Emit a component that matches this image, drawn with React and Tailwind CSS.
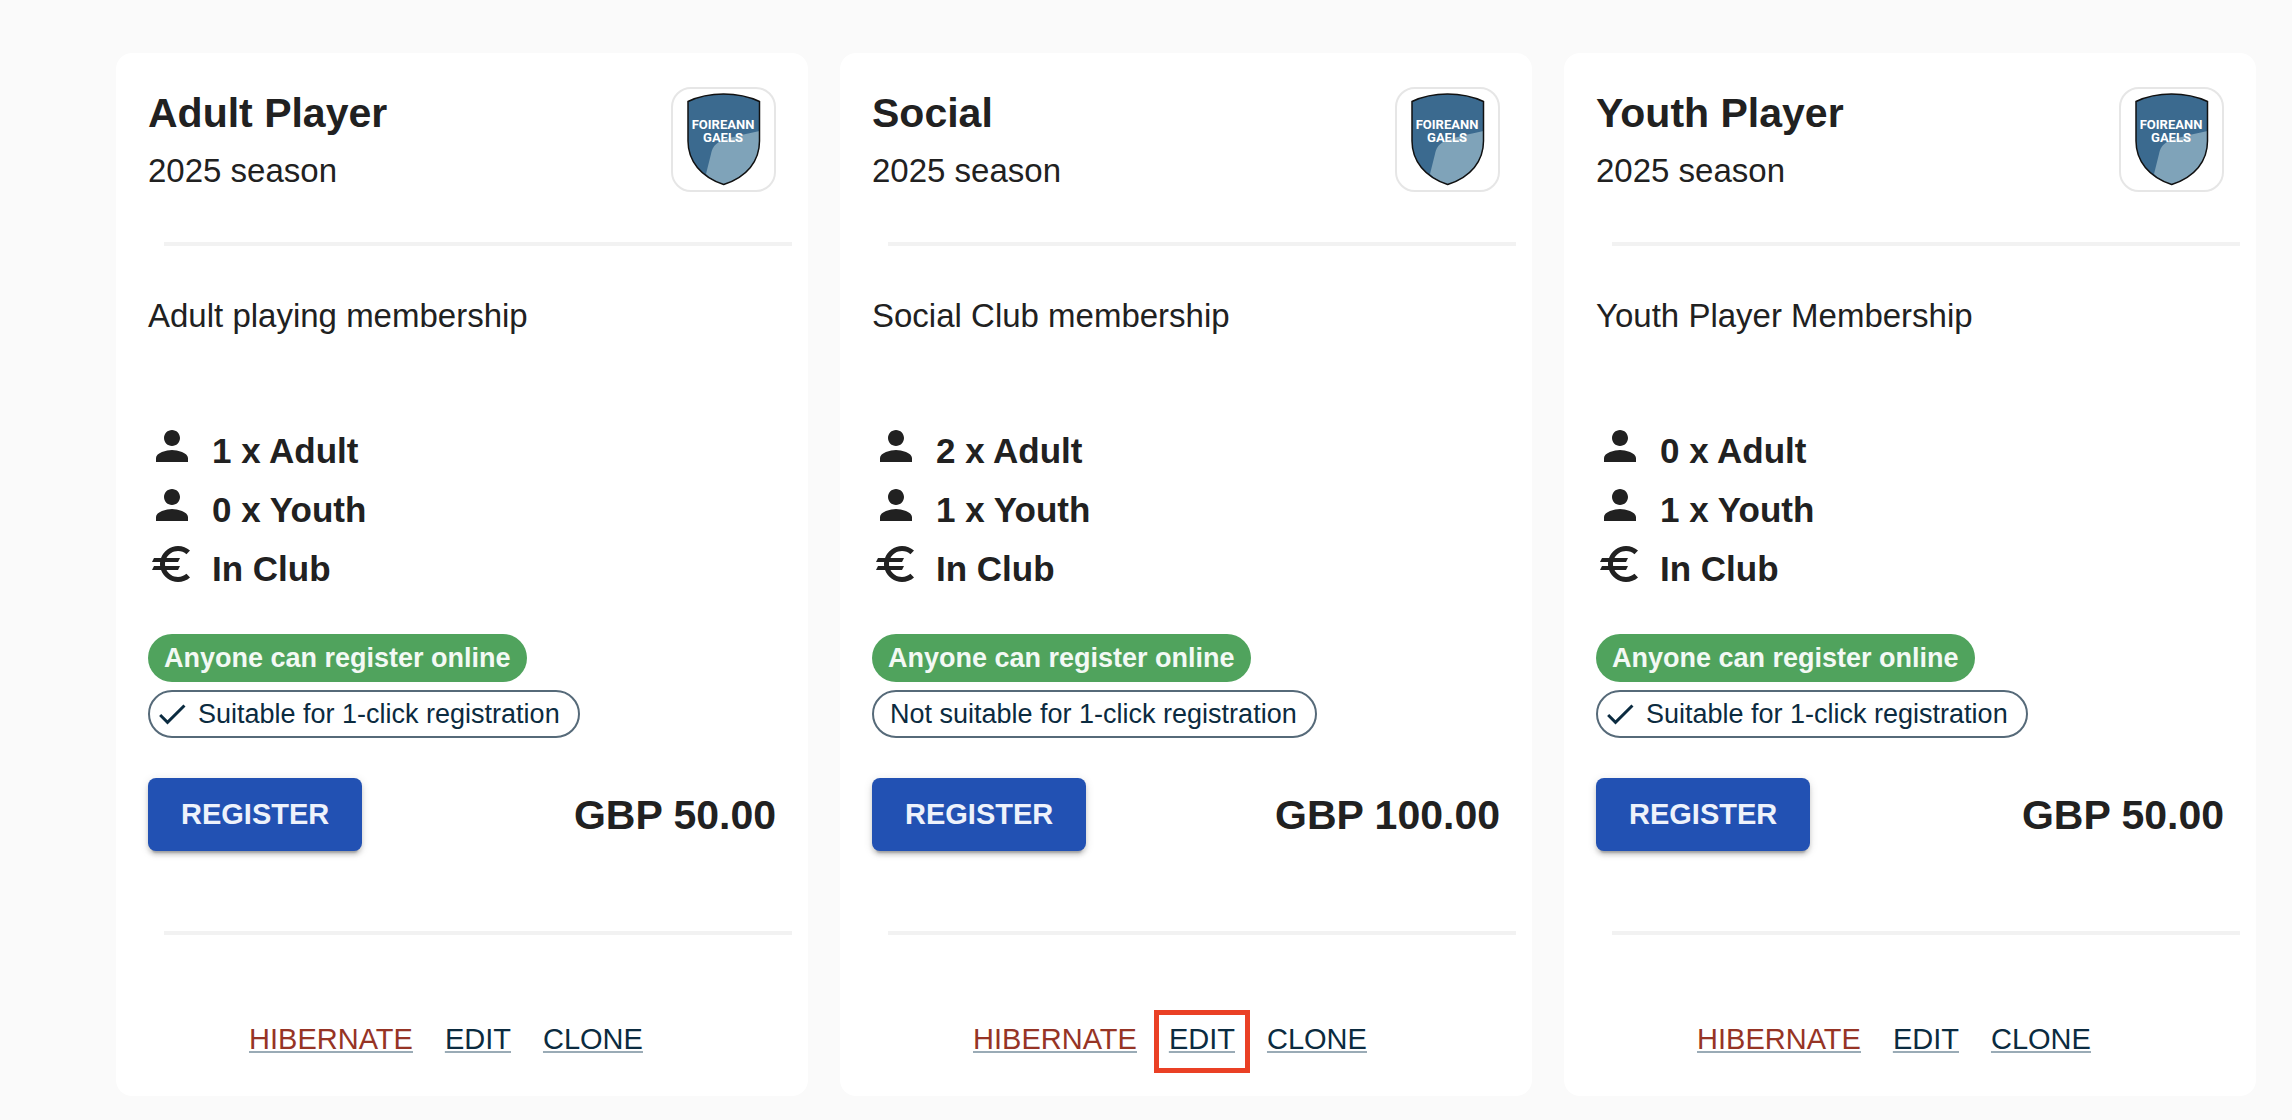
import React from 'react';

const memberships = [
  {
    name: 'Adult Player',
    season: '2025 season',
    description: 'Adult playing membership',
    adults: 1,
    youths: 0,
    payment: 'In Club',
    oneClick: true,
    price: 'GBP 50.00',
  },
  {
    name: 'Social',
    season: '2025 season',
    description: 'Social Club membership',
    adults: 2,
    youths: 1,
    payment: 'In Club',
    oneClick: false,
    price: 'GBP 100.00',
    highlightEdit: true,
  },
  {
    name: 'Youth Player',
    season: '2025 season',
    description: 'Youth Player Membership',
    adults: 0,
    youths: 1,
    payment: 'In Club',
    oneClick: true,
    price: 'GBP 50.00',
  },
];

const ICON_PATHS = {
  person:
    'M12 12c2.21 0 4-1.79 4-4s-1.79-4-4-4-4 1.79-4 4 1.79 4 4 4zm0 2c-2.67 0-8 1.34-8 4v2h16v-2c0-2.66-5.33-4-8-4z',
  euro:
    'M15 18.5c-2.51 0-4.68-1.42-5.76-3.5H15l1-2H8.58c-.05-.33-.08-.66-.08-1s.03-.67.08-1H15l1-2H9.24C10.32 6.92 12.5 5.5 15 5.5c1.61 0 3.09.59 4.23 1.57L21 5.3C19.41 3.87 17.3 3 15 3c-3.92 0-7.24 2.51-8.48 6H3l-1 2h4.06c-.04.33-.06.66-.06 1s.02.67.06 1H3l-1 2h4.52c1.24 3.49 4.56 6 8.48 6 2.31 0 4.41-.87 6-2.3l-1.78-1.77c-1.13.98-2.6 1.57-4.22 1.57z',
  done: 'M9 16.2 4.8 12l-1.4 1.4L9 19 21 7l-1.4-1.4z',
};

const Icon = ({ name, className }) => (
  <svg viewBox="0 0 24 24" fill="currentColor" className={className} aria-hidden="true">
    <path d={ICON_PATHS[name]} />
  </svg>
);

const ClubCrest = () => (
  <div className="size-[105px] shrink-0 overflow-hidden rounded-[20px] border-2 border-[#e6e6e6]">
    <svg viewBox="0 0 101 101" className="block size-full" role="img" aria-label="Foireann Gaels">
      <path
        d="M15 12.500C36 2.500 65 2.500 86.500 12.500V52C86.500 72 74 88 50.700 95.500C28 88 15 72 15 52Z"
        fill="#3b6a8f"
      />
      <path
        d="M86.500 42C72 45 54 49 46 53C41 56 39 60 38 65L33 85C38 90 44 93.500 50.700 95.500C74 88 86.500 72 86.500 52Z"
        fill="#7fa3b9"
      />
      <path
        d="M15 12.500C36 2.500 65 2.500 86.500 12.500V52C86.500 72 74 88 50.700 95.500C28 88 15 72 15 52Z"
        fill="none"
        stroke="#111"
        strokeWidth="1.5"
      />
      <g fill="#fff" textAnchor="middle" fontSize="13" fontWeight="700" fontFamily="Roboto, sans-serif">
        <text x="50" y="40">FOIREANN</text>
        <text x="50" y="53">GAELS</text>
      </g>
    </svg>
  </div>
);

const Divider = () => <hr className="-mr-4 ml-4 border-0 border-t-4 border-[#f2f2f2]" />;

const Detail = ({ icon, children }) => (
  <li className="flex h-[59px] items-start gap-4">
    <Icon name={icon} className="size-12" />
    <span className="text-[35px] leading-[58px] font-bold">{children}</span>
  </li>
);

const MembershipCard = ({ item }) => (
  <article className="rounded-2xl bg-white px-8 pt-8 pb-[38px]">
    <div className="flex items-start justify-between pb-[41px]">
      <div>
        <h2 className="text-[41px] leading-[56px] font-bold">{item.name}</h2>
        <p className="text-[33px] leading-[60px]">{item.season}</p>
      </div>
      <div className="pt-0.5">
        <ClubCrest />
      </div>
    </div>

    <Divider />

    <p className="pt-[46px] text-[33px] leading-12">{item.description}</p>

    <ul className="pt-[82px]">
      <Detail icon="person">{item.adults} x Adult</Detail>
      <Detail icon="person">{item.youths} x Youth</Detail>
      <Detail icon="euro">{item.payment}</Detail>
    </ul>

    <div className="flex flex-col items-start gap-2 pt-[35px]">
      <span className="flex h-12 items-center rounded-full bg-[#50a35d] px-4 text-[27px] font-bold text-[#f3f9f4]">
        Anyone can register online
      </span>
      <span className="flex h-12 items-center rounded-full border-2 border-[#566a79] pr-[18px] pl-4 text-[27px] text-[#0b2b40]">
        {item.oneClick && <Icon name="done" className="-ml-3 mr-2 size-9" />}
        {item.oneClick ? 'Suitable for 1-click registration' : 'Not suitable for 1-click registration'}
      </span>
    </div>

    <div className="flex items-center justify-between pt-10 pb-20">
      <button
        type="button"
        className="h-[73px] rounded-lg bg-[#2251b3] px-[33px] text-[29px] font-bold text-[#eef2fb] shadow-[0_6px_2px_-4px_rgba(0,0,0,0.2),0_4px_4px_rgba(0,0,0,0.14),0_2px_10px_rgba(0,0,0,0.12)]"
      >
        REGISTER
      </button>
      <span className="text-[41px] leading-[56px] font-bold">{item.price}</span>
    </div>

    <Divider />

    <div className="flex justify-center gap-8 pt-[90px] pr-8 text-[29px] leading-7 text-[#0b2b40] underline decoration-[#9aabb6] decoration-2 underline-offset-2">
      <a href="#hibernate" className="pb-[5px] text-[#963425]">HIBERNATE</a>
      <a
        href="#edit"
        className={item.highlightEdit ? 'pb-[5px] outline-5 outline-offset-10 outline-[#ea4025]' : 'pb-[5px]'}
      >
        EDIT
      </a>
      <a href="#clone" className="pb-[5px]">CLONE</a>
    </div>
  </article>
);

const App = () => {
  return (
    <main className="grid min-h-screen grid-cols-3 items-start gap-8 bg-[#fafafa] pt-[53px] pr-9 pb-6 pl-[116px] font-['Liberation_Sans',Arial,sans-serif] text-[#212121]">
      {memberships.map((item) => (
        <MembershipCard key={item.name} item={item} />
      ))}
    </main>
  );
};

export default App;
